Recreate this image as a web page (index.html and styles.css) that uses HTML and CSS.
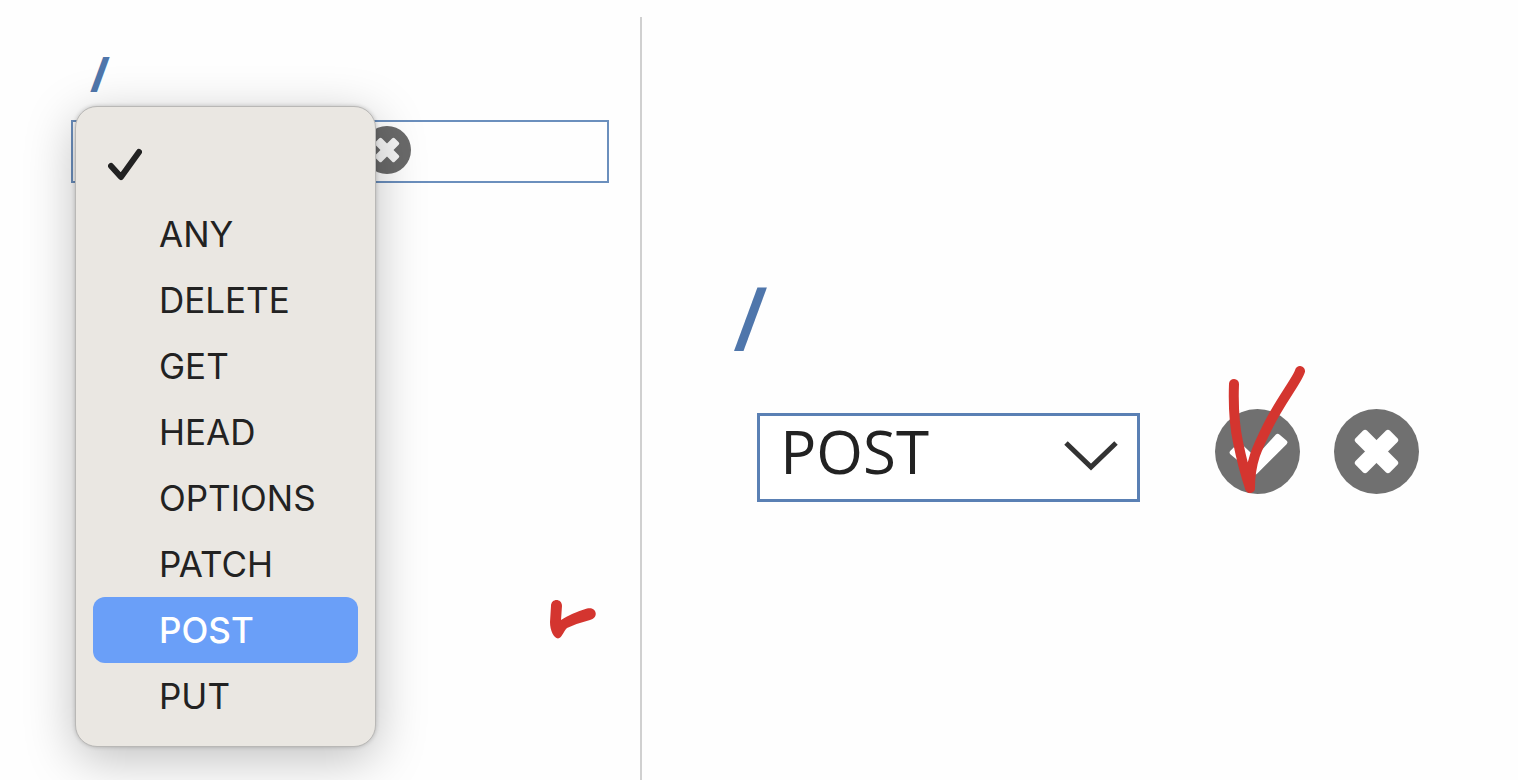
FILE: index.html
```html
<!DOCTYPE html>
<html lang="en">
<head>
    <meta charset="UTF-8">
    <meta name="viewport" content="width=device-width, initial-scale=1.0">
    <title>Create Method</title>

    <link rel="stylesheet" href="styles.css">
</head>
<body>
    <main class="steps">
        <section class="step step-open">
            <a class="resource" href="#">/</a>

            <div class="method-row">
                <button class="icon-button" type="button" aria-label="Cancel">
                    <svg viewBox="0 0 84 84">
                        <circle cx="42" cy="42" r="42" fill="#6a6a6a"/>
                        <g fill="#f6f6f6">
                            <rect x="18" y="34" width="48" height="16" rx="3" transform="rotate(45 42 42)"/>
                            <rect x="18" y="34" width="48" height="16" rx="3" transform="rotate(-45 42 42)"/>
                        </g>
                    </svg>
                </button>

                <ul class="menu">
                    <li>
                        <button class="menu-item blank" type="button" aria-label="No method">
                            <svg class="tick" viewBox="0 0 34 34">
                                <path d="M3 18L13 29L31 4" fill="none" stroke="#222" stroke-width="6" stroke-linecap="round" stroke-linejoin="round"/>
                            </svg>
                        </button>
                    </li>
                    <li><button class="menu-item" type="button">ANY</button></li>
                    <li><button class="menu-item" type="button">DELETE</button></li>
                    <li><button class="menu-item" type="button">GET</button></li>
                    <li><button class="menu-item" type="button">HEAD</button></li>
                    <li><button class="menu-item" type="button">OPTIONS</button></li>
                    <li><button class="menu-item" type="button">PATCH</button></li>
                    <li><button class="menu-item selected" type="button">POST</button></li>
                    <li><button class="menu-item" type="button">PUT</button></li>
                </ul>
            </div>

            <!-- pen mark next to POST -->
            <svg class="mark mark-small" viewBox="0 0 48 40">
                <path d="M1 6C1 -2 12 -2 12 6L11 20Q22 13 37 8.500C47 6 49 18 40 20Q28 23 17 28C13 32 12 38 8 38.500C4 38 0 31 0 22Z" fill="#d4352f"/>
            </svg>
        </section>

        <section class="step step-done">
            <a class="resource large" href="#">/</a>

            <div class="confirm-row">
                <div class="select-box">
                    <select aria-label="Method">
                        <option>ANY</option>
                        <option>DELETE</option>
                        <option>GET</option>
                        <option>HEAD</option>
                        <option>OPTIONS</option>
                        <option>PATCH</option>
                        <option selected>POST</option>
                        <option>PUT</option>
                    </select>
                    <svg class="arrow" viewBox="0 0 54 30">
                        <path d="M2 2L27 26L52 2" fill="none" stroke="#333" stroke-width="5"/>
                    </svg>
                </div>

                <button class="icon-button large" type="button" aria-label="Save">
                    <svg viewBox="0 0 84 84">
                        <circle cx="42" cy="42" r="42" fill="#707070"/>
                        <path d="M17 43L24 36L40 51L62 27L69 33L40 62Z" fill="#fff" stroke="#fff" stroke-width="5" stroke-linejoin="round"/>
                    </svg>
                    <!-- pen mark over the save button -->
                    <svg class="mark mark-large" viewBox="0 0 78 130">
                        <path d="M6 18C5 45 7 62 10 76Q15 101 22 122C22 96 29 82 40 60C53 34 70 13 72 5" fill="none" stroke="#d4352f" stroke-width="10" stroke-linecap="round" stroke-linejoin="round"/>
                    </svg>
                </button>

                <button class="icon-button large" type="button" aria-label="Cancel">
                    <svg viewBox="0 0 84 84">
                        <circle cx="42" cy="42" r="42" fill="#707070"/>
                        <g fill="#fff">
                            <rect x="18" y="34" width="48" height="16" rx="3" transform="rotate(45 42 42)"/>
                            <rect x="18" y="34" width="48" height="16" rx="3" transform="rotate(-45 42 42)"/>
                        </g>
                    </svg>
                </button>
            </div>
        </section>
    </main>
</body>
</html>
```

FILE: styles.css
```css
* {
    box-sizing: border-box;
}

body {
    margin: 0;
    background: #fefefe;
    font-family: "Open Sans", sans-serif;
    color: #222;
}

button {
    padding: 0;
    border: none;
    background: none;
    font: inherit;
    color: inherit;
    cursor: pointer;
}

.steps {
    display: grid;
    grid-template-columns: 11fr 15fr;
    min-height: 100vh;
    padding-top: 17px;
}

.step {
    position: relative;
}

.step-open {
    padding: 25px 31px 0 71px;
    border-right: 2px solid #d0d0d0;
}

.step-done {
    padding: 244px 24px 0 91px;
}

.resource {
    display: block;
    width: max-content;
    margin-left: 19px;
    font-size: 48px;
    font-weight: 700;
    line-height: 64px;
    color: #4f76ab;
    text-decoration: none;
}

.resource.large {
    margin-left: 0;
    font-size: 88px;
    font-weight: 600;
    line-height: 112px;
}

.method-row {
    position: relative;
    height: 63px;
    margin-top: 14px;
    padding: 4px 0 0 290px;
    border: 2px solid #6b8fbd;
}

.icon-button {
    display: block;
    position: relative;
    flex: none;
    width: 48px;
    height: 48px;
}

.icon-button.large {
    width: 85px;
    height: 85px;
}

.icon-button svg {
    display: block;
    width: 100%;
}

/* native style popup with the list of methods */
.menu {
    position: absolute;
    top: -16px;
    left: 2px;
    width: 301px;
    margin: 0;
    padding: 17px;
    list-style: none;
    background: #eae7e2;
    border: 1px solid #b9b8b6;
    border-radius: 22px;
    box-shadow: 0 12px 50px rgba(0, 0, 0, 0.25), 0 0 4px rgba(0, 0, 0, 0.2);
}

.menu-item {
    display: block;
    width: 100%;
    height: 66px;
    padding-left: 66px;
    border-radius: 12px;
    font-family: Inter, sans-serif;
    font-size: 35px;
    text-align: left;
}

.menu-item.blank {
    height: 77px;
    padding: 4px 0 0 15px;
}

.menu-item.selected {
    background: #6a9ff8;
    color: #fff;
    font-weight: 500;
}

.tick {
    display: block;
    width: 34px;
}

.confirm-row {
    display: flex;
    align-items: flex-start;
    gap: 34px;
    margin-top: 36px;
    padding-left: 24px;
}

.select-box {
    position: relative;
    flex: 0 1 383px;
    margin: 4px 41px 0 0;
}

.select-box select {
    display: block;
    width: 100%;
    height: 89px;
    padding: 0 60px 16px 20px;
    appearance: none;
    background: #fff;
    border: 3px solid #5a80b4;
    border-radius: 0;
    font-family: "Open Sans", sans-serif;
    font-size: 60px;
    line-height: 70px;
    color: #222;
}

.arrow {
    position: absolute;
    top: 28px;
    right: 22px;
    width: 54px;
    pointer-events: none;
}

.mark {
    position: absolute;
    pointer-events: none;
}

.mark-small {
    top: 583px;
    right: 42px;
    width: 48px;
}

.icon-button .mark-large {
    top: -43px;
    left: 13px;
    width: 78px;
}
```
